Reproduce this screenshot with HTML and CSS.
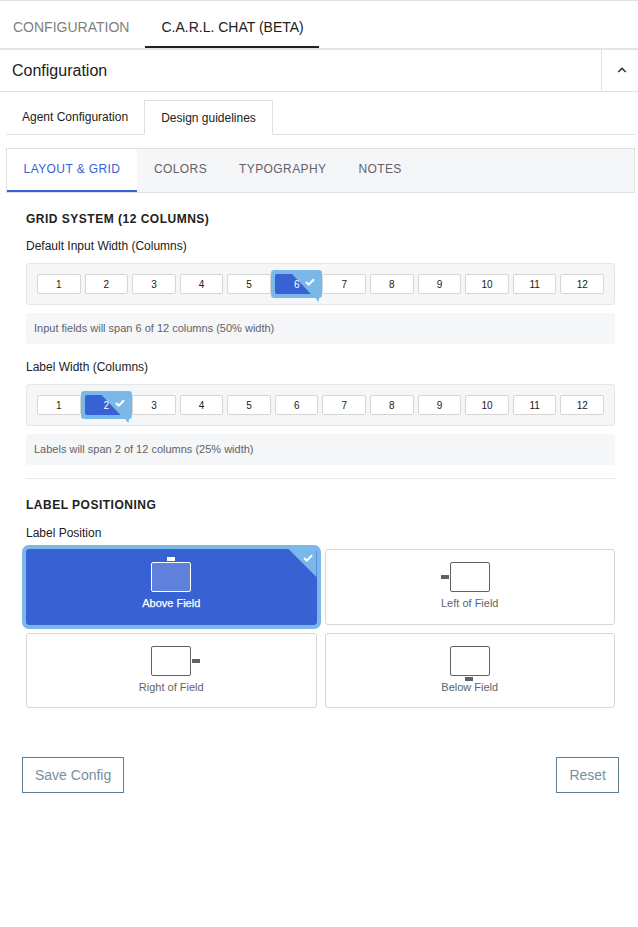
FILE: index.html
```html
<!DOCTYPE html>
<html lang="en">
<head>
<meta charset="utf-8">
<title>Configuration</title>
<link rel="stylesheet" href="styles.css">
</head>
<body>
<nav class="top-tabs">
  <a class="top-tab">CONFIGURATION</a>
  <a class="top-tab is-active">C.A.R.L. CHAT (BETA)</a>
</nav>
<header class="panel-head">
  <h1 class="panel-title">Configuration</h1>
  <button class="collapse" aria-label="Collapse">
    <svg width="10" height="6" viewBox="0 0 10 6"><path d="M1.2 5 L5 1.4 L8.8 5" fill="none" stroke="#333" stroke-width="1.5"/></svg>
  </button>
</header>
<div class="sub-tabs">
  <a class="sub-tab">Agent Configuration</a>
  <a class="sub-tab is-active">Design guidelines</a>
</div>
<div class="inner-tabs">
  <a class="inner-tab is-active">LAYOUT &amp; GRID</a>
  <a class="inner-tab">COLORS</a>
  <a class="inner-tab">TYPOGRAPHY</a>
  <a class="inner-tab">NOTES</a>
</div>
<main class="content">
  <h2 class="section-title">GRID SYSTEM (12 COLUMNS)</h2>
  <div class="field-label">Default Input Width (Columns)</div>
  <div class="col-group">
    <button class="col">1</button><button class="col">2</button><button class="col">3</button><button class="col">4</button><button class="col">5</button>
    <button class="col is-selected"><span class="col-num">6</span><svg class="col-check" width="10" height="8" viewBox="0 0 10 8"><path d="M1 4 L3.8 6.6 L9 1.2" fill="none" stroke="#fff" stroke-width="2"/></svg></button>
    <button class="col">7</button><button class="col">8</button><button class="col">9</button><button class="col">10</button><button class="col">11</button><button class="col">12</button>
  </div>
  <p class="hint">Input fields will span 6 of 12 columns (50% width)</p>
  <div class="field-label">Label Width (Columns)</div>
  <div class="col-group">
    <button class="col">1</button>
    <button class="col is-selected"><span class="col-num">2</span><svg class="col-check" width="10" height="8" viewBox="0 0 10 8"><path d="M1 4 L3.8 6.6 L9 1.2" fill="none" stroke="#fff" stroke-width="2"/></svg></button>
    <button class="col">3</button><button class="col">4</button><button class="col">5</button><button class="col">6</button><button class="col">7</button><button class="col">8</button><button class="col">9</button><button class="col">10</button><button class="col">11</button><button class="col">12</button>
  </div>
  <p class="hint">Labels will span 2 of 12 columns (25% width)</p>
  <hr class="rule">
  <h2 class="section-title">LABEL POSITIONING</h2>
  <div class="field-label field-label-pos">Label Position</div>
  <div class="pos-grid">
    <button class="pos is-selected">
      <span class="pos-icon tag-above"></span>
      <span class="pos-name">Above Field</span>
      <svg class="pos-check" width="10" height="8" viewBox="0 0 10 8"><path d="M1 4 L3.8 6.6 L9 1.2" fill="none" stroke="#fff" stroke-width="2"/></svg>
    </button>
    <button class="pos"><span class="pos-icon tag-left"></span><span class="pos-name">Left of Field</span></button>
    <button class="pos"><span class="pos-icon tag-right"></span><span class="pos-name">Right of Field</span></button>
    <button class="pos"><span class="pos-icon tag-below"></span><span class="pos-name">Below Field</span></button>
  </div>
</main>
<footer class="actions">
  <button class="action">Save Config</button>
  <button class="action">Reset</button>
</footer>
</body>
</html>
```
FILE: styles.css
```css
* { box-sizing: border-box; }
html, body { margin: 0; padding: 0; background: #fff; }
body { font-family: "Liberation Sans", Arial, sans-serif; color: #212121; width: 638px; height: 927px; overflow: hidden; }
button { font-family: inherit; padding: 0; background: none; cursor: pointer; }

.top-tabs { display: flex; height: 50px; border-top: 1px solid #e0e0e0; border-bottom: 2px solid #e4e4e4; }
.top-tab { height: 47px; line-height: 52px; font-size: 14px; color: #7f7f7f; padding: 0 16px 0 13px; white-space: nowrap; }
.top-tab.is-active { color: #212121; border-bottom: 2px solid #212121; padding: 0 15px 0 16px; }

.panel-head { display: flex; height: 42px; border-bottom: 1px solid #e0e0e0; align-items: stretch; justify-content: space-between; }
.panel-title { margin: 0; font-size: 16px; font-weight: 400; line-height: 41px; padding-left: 12px; color: #212121; }
.collapse { width: 37px; border: 0; border-left: 1px solid #e0e0e0; display: flex; align-items: center; justify-content: center; padding: 0 0 1px 4px; }

.sub-tabs { display: flex; margin: 8px 3px 0 6px; height: 35px; border-bottom: 1px solid #e0e0e0; }
.sub-tab { font-size: 12px; line-height: 34px; padding: 0 16px; color: #212121; width: 138px; white-space: nowrap; }
.sub-tab.is-active { width: 129px; height: 35px; border: 1px solid #e0e0e0; border-bottom: 1px solid #fff; line-height: 35px; text-align: center; padding: 0; background: #fff; }

.inner-tabs { display: flex; margin: 13px 3px 0 6px; height: 45px; background: #f5f6f8; border: 1px solid #e0e0e0; }
.inner-tab { font-size: 12px; letter-spacing: 0.4px; line-height: 40px; color: #5f6368; padding: 0 16px; white-space: nowrap; }
.inner-tab.is-active { width: 130px; margin-right: 1px; text-align: center; background: #fff; color: #3862d3; border-bottom: 2px solid #3862d3; height: 43px; }

.content { margin: 0 23px 0 26px; padding-top: 19px; }
.section-title { margin: 0; font-size: 12px; font-weight: 700; line-height: 14px; letter-spacing: 0.5px; color: #212121; }
.field-label { font-size: 12px; line-height: 14px; margin-top: 13px; color: #212121; }
.col-group { display: grid; grid-template-columns: repeat(12, 1fr); column-gap: 4px; margin-top: 10px; height: 42px; padding: 10px; background: #f5f6f8; border: 1px solid #e4e6ea; border-radius: 3px; }
.col { position: relative; height: 20px; font-size: 10px; color: #212121; background: #fff; border: 1px solid #d6d6d6; border-radius: 2px; }
.col.is-selected { border: 0; background: #7ab8ea; color: #fff; box-shadow: 0 0 0 4px #7ab8ea; border-radius: 1px; }
.col.is-selected::before { content: ""; position: absolute; inset: 0; background: #3862d3; clip-path: polygon(0 0, 17px 0, 36px 100%, 0 100%); border-radius: 2px; }
.col.is-selected::after { content: ""; position: absolute; right: -1px; bottom: -8px; width: 4px; height: 4px; background: #7ab8ea; clip-path: polygon(0 0, 100% 0, 75% 100%); }
.col-num { position: relative; }
.col-check { position: absolute; right: 3px; top: 4px; }
.hint { margin: 8px 0 0; height: 31px; padding: 0 8px; font-size: 11px; line-height: 31px; color: #5f6368; background: #f5f6f8; border-radius: 3px; }
.hint + .field-label { margin-top: 16px; }
.rule { margin: 13px 0 0; border: 0; border-top: 1px solid #e8e8ec; }
.rule + .section-title { margin-top: 19px; }
.field-label-pos { margin-top: 14px; }

.pos-grid { display: grid; grid-template-columns: 1fr 1fr; gap: 8px; margin-top: 9px; }
.pos { position: relative; height: 76px; background: #fff; border: 1px solid #d6d6d8; border-radius: 3px; display: flex; flex-direction: column; align-items: center; padding-top: 12px; color: #5f6368; }
.pos:nth-child(n+3) { height: 75px; }
.pos.is-selected { background: #3862d3; border-color: #3862d3; color: #fff; box-shadow: 0 0 0 4px #7ab8ea; }
.pos.is-selected::before { content: ""; position: absolute; top: -1px; right: -1px; width: 28px; height: 28px; background: #7ab8ea; clip-path: polygon(0 0, 100% 0, 100% 100%); }
.pos-check { position: absolute; top: 4px; right: 3px; }
.pos-icon { position: relative; width: 40px; height: 30px; border: 1.5px solid #5f6368; border-radius: 2px; background: #fff; }
.pos-icon::after { content: ""; position: absolute; width: 8px; height: 4px; background: #5f6368; }
.is-selected .pos-icon { border-color: #fff; background: rgba(255,255,255,0.2); }
.is-selected .pos-icon::after { background: #fff; }
.tag-above::after { top: -6.5px; left: 14.5px; }
.tag-left::after { left: -10px; top: 11.5px; }
.tag-right::after { right: -10px; top: 11.5px; }
.tag-below::after { bottom: -6px; left: 14.5px; }
.pos-name { font-size: 11px; line-height: 14px; margin-top: 4px; }
.is-selected .pos-name { -webkit-text-stroke: 0.25px #fff; }

.actions { display: flex; justify-content: space-between; margin: 49px 19px 0 22px; }
.action { height: 36px; padding: 0 12px; font-size: 14px; color: #78909c; background: #fff; border: 1px solid #5f7d8e; }
```
